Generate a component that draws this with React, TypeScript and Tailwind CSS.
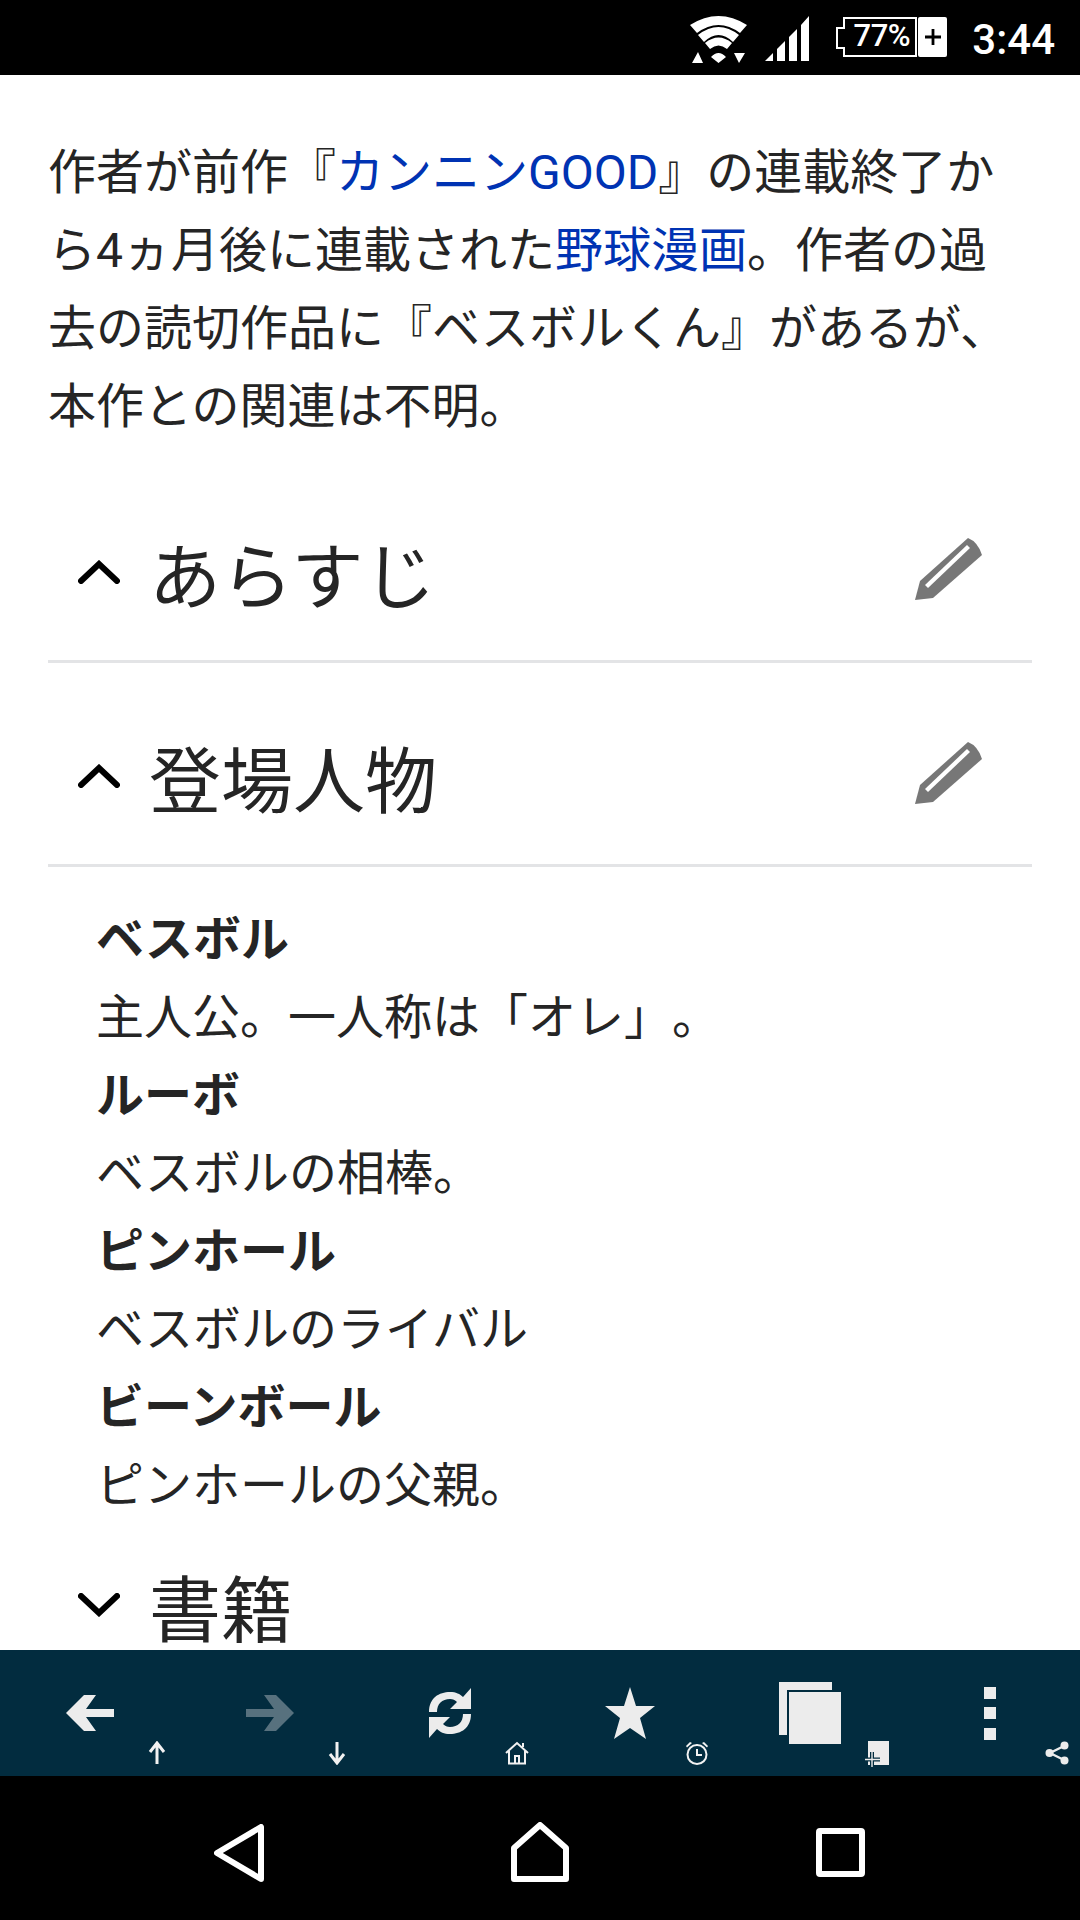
const Wifi = () => (
  <svg width="57" height="47" viewBox="0 0 57 47" className="block">
    <path d="M0 9 Q28.5 -9 57 9 L50 17 Q28.5 1 7 17Z M8 19 Q28.5 3 49 19 L43 26 Q28.5 12 14 26Z M15 27 Q28.5 16 42 27 L37 33 Q28.5 26 20 33Z" fill="#fff" />
    <path d="M28.5 47 L21 41 Q28.5 33 36 41Z M2 47 L8 36 L13 47Z M44 37 L55 37 L49 47Z" fill="#fff" />
  </svg>
);
const Signal = () => (
  <svg width="44" height="45" viewBox="0 0 44 45" className="block">
    <path d="M0 45 L8 37 V45Z M12 45 V33 L20 25 V45Z M24 45 V21 L32 13 V45Z M36 45 V9 L44 0 V45Z" fill="#fff" />
  </svg>
);
const Battery = () => (
  <div className="relative flex h-[40px] w-[111px]">
    <svg width="81" height="40" viewBox="0 0 81 40" className="absolute left-0 top-0">
      <path d="M8 1 H80 V39 H8 V31 H1 V11 H8Z" fill="none" stroke="#fff" strokeWidth="2" />
    </svg>
    <span className="relative ml-[13px] w-[65px] text-center text-[31px] leading-[38px] font-medium text-white font-['Roboto',sans-serif] tracking-[-0.5px]">77%</span>
    <span className="relative ml-[4px] flex h-[40px] w-[29px] items-center justify-center rounded-[2px] bg-white">
      <svg width="18" height="18" viewBox="0 0 18 18"><path d="M7.6 1h2.8v6.6H17v2.8h-6.6V17H7.6v-6.6H1V7.6h6.6z" fill="#000" /></svg>
    </span>
  </div>
);

const Pencil = () => (
  <svg width="67" height="63" viewBox="0 0 67 63" className="block">
    <path d="M0 62 L5 43 L53 0 Q63 4 67 17 L18 60 Z" fill="#777777" />
    <path d="M10 47 L52 7 L55 10 L13 50 Z" fill="#fff" />
  </svg>
);
const Chevron = ({ down }: { down?: boolean }) => (
  <svg width="42" height="24" viewBox="0 0 42 24" className="block">
    <path d={down ? "M3 3 L21 20 L39 3" : "M3 21 L21 4 L39 21"} fill="none" stroke="#000" strokeWidth="6" strokeLinecap="round" strokeLinejoin="miter" />
  </svg>
);

const Heading = ({ text, className = "" }: { text: string; className?: string }) => (
  <div className={`flex h-[204px] shrink-0 items-center border-b-[3px] border-[#e3e4e6] pt-[38px] pl-[30px] pr-[50px] ${className}`}>
    <span className="-mt-[14px]"><Chevron /></span>
    <span className="ml-[29px] text-[72px] leading-[90px] text-[#252525] font-normal">{text}</span>
    <span className="ml-auto -mt-[18px]"><Pencil /></span>
  </div>
);

const Back = ({ dim }: { dim?: boolean }) => (
  <svg width="48" height="36" viewBox="0 0 48 36" className="block">
    <path d={dim ? "M0 14 H28 L18 0 H30 L48 18 L30 36 H18 L28 22 H0Z" : "M48 14 H20 L30 0 H18 L0 18 L18 36 H30 L20 22 H48Z"} fill={dim ? "#57717e" : "#ececec"} />
  </svg>
);
const Reload = () => (
  <svg width="42" height="50" viewBox="0 0 42 50" className="block">
    <path d="M0 24 C0 10 10 4 21 4 C27 4 31 6 34 9 L42 0 V21 H21 L28 14 C26 12 24 11 21 11 C13 11 8 16 8 24Z" fill="#ececec" />
    <path d="M42 26 C42 40 32 46 21 46 C15 46 11 44 8 41 L0 50 V29 H21 L14 36 C16 38 18 39 21 39 C29 39 34 34 34 26Z" fill="#ececec" />
  </svg>
);
const Star = () => (
  <svg width="50" height="52" viewBox="0 0 50 52" className="block">
    <path d="M25 0 L31 19 L50 19 L35 31 L41 52 L25 41 L9 52 L15 31 L0 19 L19 19Z" fill="#ececec" />
  </svg>
);
const Tabs = () => (
  <svg width="62" height="62" viewBox="0 0 62 62" className="block">
    <path d="M0 0 H53 V8 H8 V53 H0Z" fill="#ececec" />
    <rect x="10" y="10" width="52" height="52" fill="#ececec" />
  </svg>
);
const Dots = () => (
  <svg width="12" height="53" viewBox="0 0 12 53" className="block">
    <rect width="12" height="12" fill="#ececec" />
    <rect y="20" width="12" height="12" fill="#ececec" />
    <rect y="41" width="12" height="12" fill="#ececec" />
  </svg>
);
const Up = ({ down }: { down?: boolean }) => (
  <svg width="18" height="24" viewBox="0 0 18 24" className="block">
    <path d={down ? "M9 1 V21 M2 13 L9 22 L16 13" : "M9 23 V3 M2 11 L9 2 L16 11"} fill="none" stroke="#f2f2f2" strokeWidth="3" />
  </svg>
);
const HomeS = () => (
  <svg width="24" height="24" viewBox="0 0 24 24" className="block">
    <path d="M1 12 L12 2 L23 12 M4 10 V22.5 H20 V10 M10 22 V15 H14 V22 M18 2 V6" fill="none" stroke="#f2f2f2" strokeWidth="2" />
  </svg>
);
const Alarm = () => (
  <svg width="24" height="24" viewBox="0 0 24 24" className="block">
    <circle cx="12" cy="13.5" r="9.5" fill="none" stroke="#f2f2f2" strokeWidth="2" />
    <path d="M12 8 V14 H17" fill="none" stroke="#f2f2f2" strokeWidth="2" />
    <path d="M1 5 L5 1 L7 2 L2 6.5Z M23 5 L19 1 L17 2 L22 6.5Z" fill="#f2f2f2" />
  </svg>
);
const NewTab = () => (
  <svg width="24" height="26" viewBox="0 0 24 26" className="block">
    <rect x="3" y="0" width="21" height="24" fill="#ececec" />
    <path d="M7 11 V26 M0 18.5 H15" stroke="#022c3f" strokeWidth="4" fill="none" />
    <path d="M7 11 V26 M0 18.5 H15" stroke="#ececec" strokeWidth="1.4" fill="none" />
  </svg>
);
const Share = () => (
  <svg width="24" height="24" viewBox="0 0 24 24" className="block">
    <path d="M19 5 L5 12 L19 19" fill="none" stroke="#ececec" strokeWidth="2.4" />
    <circle cx="19.5" cy="4.5" r="4" fill="#ececec" /><circle cx="4.5" cy="12" r="4" fill="#ececec" /><circle cx="19.5" cy="19.5" r="4" fill="#ececec" />
  </svg>
);

const ToolItem = ({ big, small }: { big: React.ReactNode; small: React.ReactNode }) => (
  <div className="relative flex h-full w-[180px] items-center justify-center">
    {big}
    <span className="absolute left-[157px] top-[91px] -translate-x-1/2">{small}</span>
  </div>
);

const Def = ({ title, desc }: { title: string; desc: string }) => (
  <>
    <div className="font-bold">{title}</div>
    <div>{desc}</div>
  </>
);

export default function App() {
  return (
    <div lang="ja" className="flex h-[1920px] w-[1080px] flex-col overflow-hidden bg-white font-['Roboto','Noto_Sans_CJK_JP',sans-serif] text-[48px] leading-[78px] text-[#252525] [text-spacing-trim:space-all]">
      <header className="flex h-[75px] shrink-0 items-start bg-black">
        <div className="ml-auto mr-[25px] flex items-start">
          <div className="mt-[16px]"><Wifi /></div>
          <div className="ml-[18px] mt-[16px]"><Signal /></div>
          <div className="ml-[27px] mt-[17px]"><Battery /></div>
          <span className="ml-[25px] mt-[15px] text-[42px] leading-[50px] font-medium text-white">3:44</span>
        </div>
      </header>

      <main className="min-h-0 flex-1 overflow-hidden px-[48px] pt-[59px]">
        <p>
          作者が前作『<a className="text-[#0033b3]">カンニンGOOD</a>』の連載終了か<br />
          ら4ヵ月後に連載された<a className="text-[#0033b3]">野球漫画</a>。作者の過<br />
          去の読切作品に『ベスボルくん』があるが、<br />
          本作との関連は不明。
        </p>
        <Heading text="あらすじ" className="mt-[13px]" />
        <Heading text="登場人物" />
        <dl className="mt-[34px] pl-[48px]">
          <Def title="ベスボル" desc="主人公。一人称は「オレ」。" />
          <Def title="ルーボ" desc="ベスボルの相棒。" />
          <Def title="ピンホール" desc="ベスボルのライバル" />
          <Def title="ビーンボール" desc="ピンホールの父親。" />
        </dl>
        <div className="mt-[42px] flex items-center pl-[30px]">
          <span className="-mt-[14px]"><Chevron down /></span>
          <span className="ml-[29px] text-[72px] leading-[90px] text-[#252525]">書籍</span>
        </div>
      </main>

      <nav className="flex h-[126px] shrink-0 bg-[#022c3f]">
        <ToolItem big={<Back />} small={<Up />} />
        <ToolItem big={<Back dim />} small={<Up down />} />
        <ToolItem big={<Reload />} small={<HomeS />} />
        <ToolItem big={<Star />} small={<Alarm />} />
        <ToolItem big={<Tabs />} small={<NewTab />} />
        <ToolItem big={<Dots />} small={<Share />} />
      </nav>

      <footer className="flex h-[144px] shrink-0 items-center bg-black">
        <div className="ml-[214px] mt-[9px]">
          <svg width="50" height="58" viewBox="0 0 50 58" className="block">
            <path d="M47 3 V55 L3 29Z" fill="none" stroke="#fff" strokeWidth="6" strokeLinejoin="round" />
          </svg>
        </div>
        <div className="ml-[247px] mt-[7px]">
          <svg width="58" height="60" viewBox="0 0 58 60" className="block">
            <path d="M3 57 V26 L29 3 L55 26 V57Z" fill="none" stroke="#fff" strokeWidth="6" strokeLinejoin="round" />
          </svg>
        </div>
        <div className="ml-[247px] mt-[9px]">
          <svg width="49" height="49" viewBox="0 0 49 49" className="block">
            <rect x="3" y="3" width="43" height="43" rx="1" fill="none" stroke="#fff" strokeWidth="6" />
          </svg>
        </div>
      </footer>
    </div>
  );
}
